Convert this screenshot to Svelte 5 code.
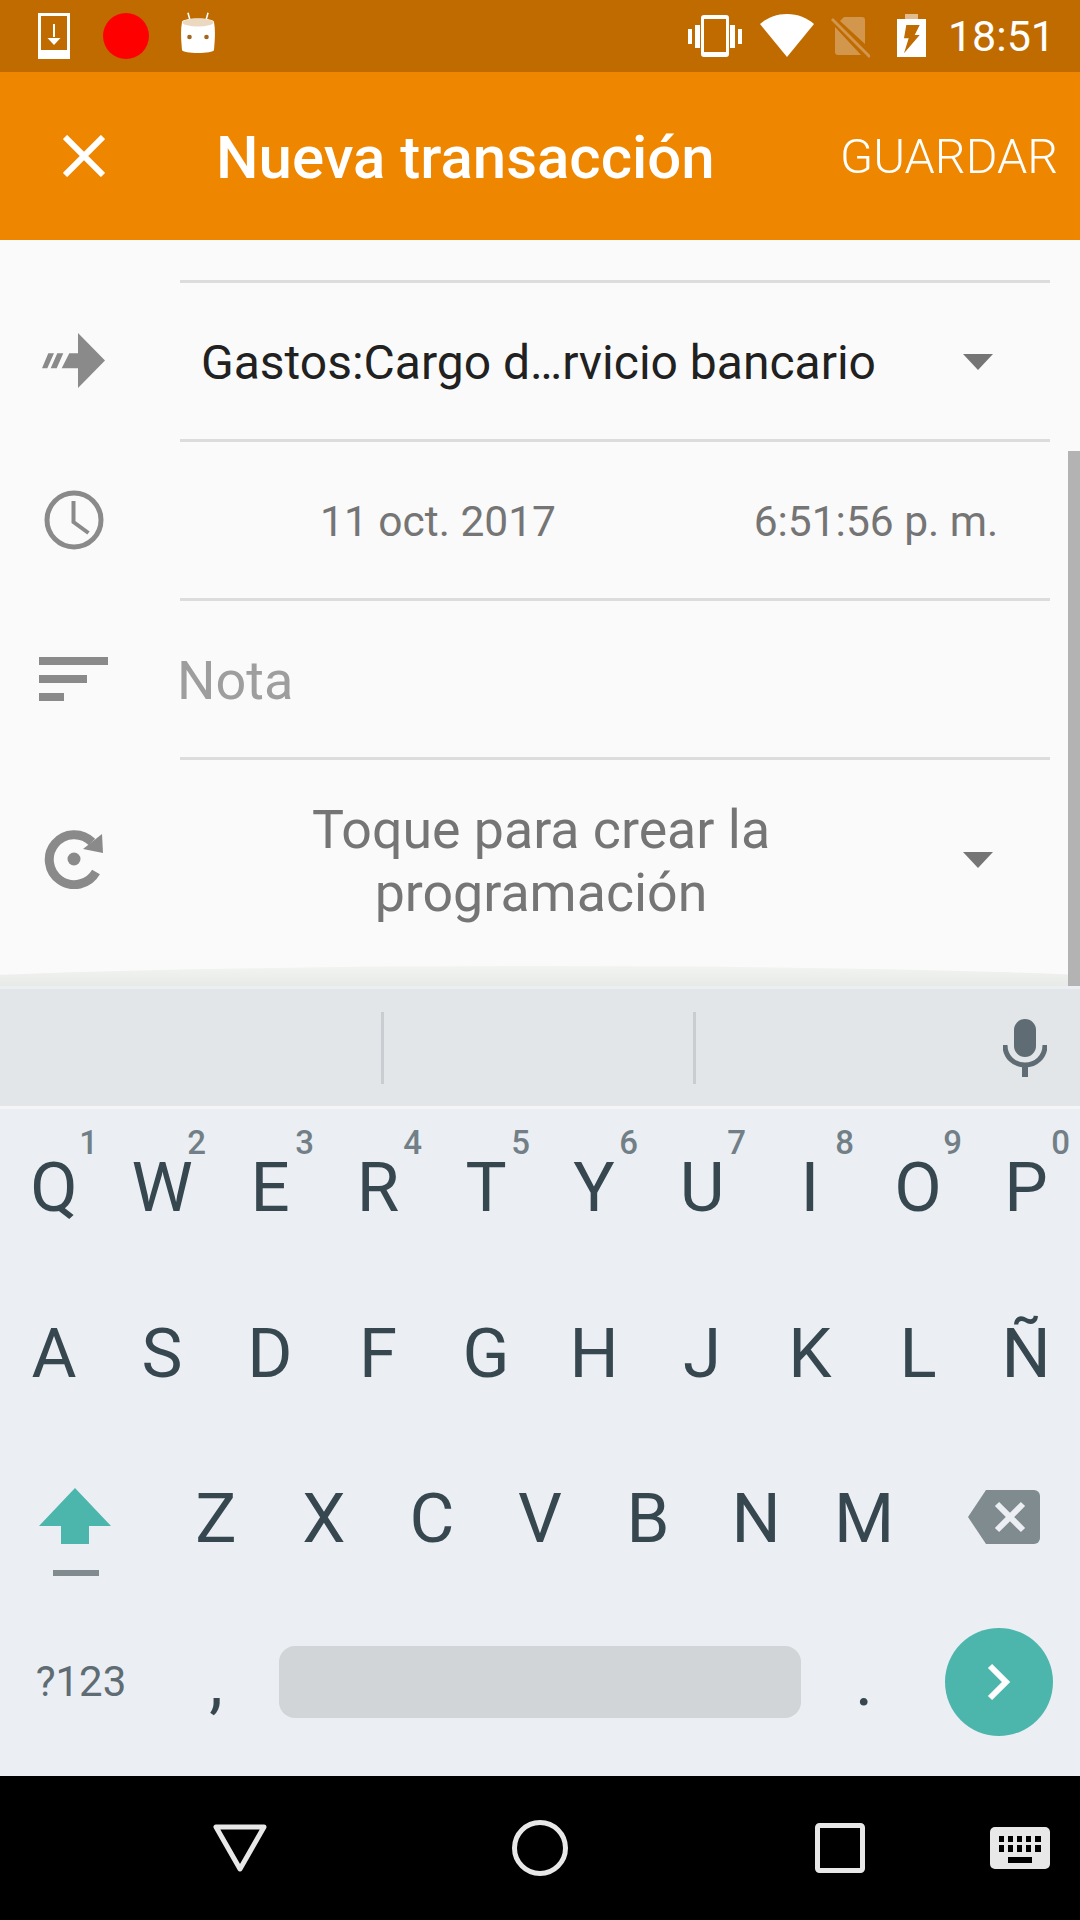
<script>
  const rowOne = [
    ['Q', '1'], ['W', '2'], ['E', '3'], ['R', '4'], ['T', '5'],
    ['Y', '6'], ['U', '7'], ['I', '8'], ['O', '9'], ['P', '0']
  ];
  const rowTwo = ['A', 'S', 'D', 'F', 'G', 'H', 'J', 'K', 'L', 'Ñ'];
  const rowThree = ['Z', 'X', 'C', 'V', 'B', 'N', 'M'];
</script>

<div class="screen">
  <header class="status">
    <div class="status-left">
      <svg class="ic-dl" viewBox="0 0 32 46" width="32" height="46">
        <path fill="#fff" fill-rule="evenodd" d="M0 0h32v46H0zM3 3v34h26V3z" />
        <path fill="#fff" d="M15 11h2v13h-2z" />
        <path fill="#fff" d="M9.500 25h13L16 32z" />
      </svg>
      <span class="rec"></span>
      <svg class="ic-m" viewBox="0 0 34 42" width="34" height="42">
        <path fill="#fff" d="M6.200 1l1.500-.4 2.500 9-1.500.4zM27.800 1l-1.500-.4-2.500 9 1.500.4z" />
        <path fill="#fff" d="M1 10c0-2 7-3.500 16-3.500S33 8 33 10c1.500 8 1 16 0 28-.3 2-8 3-16 3S1.300 40 1 38C0 26-.5 18 1 10z" />
        <ellipse cx="17" cy="10.500" rx="15.500" ry="4" fill="#ead8c0" />
        <circle cx="8.500" cy="25" r="2.300" fill="#a5651a" />
        <circle cx="25.500" cy="25" r="2.300" fill="#a5651a" />
      </svg>
    </div>
    <div class="status-right">
      <svg class="st-vib" viewBox="0 0 54 42" width="54" height="42">
        <path fill="#fff" fill-rule="evenodd" d="M13 3a3 3 0 0 1 3-3h22a3 3 0 0 1 3 3v36a3 3 0 0 1-3 3H16a3 3 0 0 1-3-3zM16 4v33h22V4z" />
        <path fill="#fff" d="M7 10h5v23H7zM42 10h5v23h-5zM0 14h4v15H0zM50 14h4v15h-4z" />
      </svg>
      <svg class="st-wifi" viewBox="0 0 54 43" width="54" height="43">
        <path fill="#fff" d="M0 10C7 4 16 0 27 0s20 4 27 10L27 43z" />
      </svg>
      <svg class="st-sim" viewBox="0 0 40 42" width="40" height="42">
        <path fill="#fff" fill-opacity=".3" d="M14 1h18a3 3 0 0 1 3 3v24L10 5zM5 11l26 28H8a3 3 0 0 1-3-3z" />
        <path fill="#fff" fill-opacity=".3" d="M3 2l38 38-2 2L1 4z" />
      </svg>
      <svg class="st-bat" viewBox="0 0 29 44" width="29" height="44">
        <path fill="#fff" fill-opacity=".55" d="M8 0h13v5H8z" />
        <path fill="#fff" fill-rule="evenodd" d="M0 5h29v38H0zM9.300 11l-2.300 13.300h4.700L7 39.300 22.700 21h-5L22.700 11z" />
      </svg>
      <span class="clock">18:51</span>
    </div>
  </header>

  <div class="toolbar">
    <svg class="close" viewBox="0 0 42 42" width="42" height="42">
      <path d="M2 2l38 38M40 2L2 40" stroke="#fff" stroke-width="6" fill="none" />
    </svg>
    <h1>Nueva transacción</h1>
    <span class="save">GUARDAR</span>
  </div>

  <main class="form">
    <div class="row">
      <svg class="icon" viewBox="0 0 64 55" width="64" height="55">
        <path fill="#8a8a8a" d="M36 0l27 27.500L36 55V35.300H19.700L27.300 20.300H36z" />
        <path fill="#8a8a8a" d="M0 35.300L6.300 20.300H12L5.300 35.300zM8.700 35.300L15.300 20.300H21.300L14.700 35.300z" />
      </svg>
      <div class="field account">
        <span class="value">Gastos:Cargo d…rvicio bancario</span>
        <i class="caret"></i>
      </div>
    </div>

    <div class="row">
      <svg class="icon" viewBox="0 0 60 60" width="60" height="60">
        <circle cx="30" cy="30" r="27" fill="none" stroke="#8a8a8a" stroke-width="5" />
        <path d="M29.500 11v21l15 11" fill="none" stroke="#8a8a8a" stroke-width="4" />
      </svg>
      <div class="field when">
        <span>11 oct. 2017</span>
        <span>6:51:56 p. m.</span>
      </div>
    </div>

    <div class="row">
      <div class="icon note-ic">
        <span class="l1"></span>
        <span class="l2"></span>
        <span class="l3"></span>
      </div>
      <div class="field note">Nota</div>
    </div>

    <div class="row last">
      <svg class="icon" viewBox="0 0 60 60" width="60" height="60">
        <path d="M48 13A25 25 0 1 0 52 43" fill="none" stroke="#8a8a8a" stroke-width="9" />
        <path fill="#8a8a8a" d="M58 5l1 19-20-4z" />
        <circle cx="30" cy="30" r="6.500" fill="#8a8a8a" />
      </svg>
      <div class="field repeat">
        <span class="value">Toque para crear la<br />programación</span>
        <i class="caret"></i>
      </div>
    </div>

    <div class="glow"></div>
    <div class="scroll"></div>
  </main>

  <div class="suggest">
    <span class="sep"></span>
    <span class="sep"></span>
    <svg viewBox="0 0 44 58" width="44" height="58" class="mic">
      <rect x="11" y="0" width="22" height="38" rx="11" fill="#5f6c73" />
      <path d="M2 26c0 12 9 20 20 20s20-8 20-20" fill="none" stroke="#5f6c73" stroke-width="5" />
      <path d="M19 44h6v14h-6z" fill="#5f6c73" />
    </svg>
  </div>

  <div class="keyboard">
    <div class="keys top">
      {#each rowOne as [letter, hint]}
        <div class="key">{letter}<sup>{hint}</sup></div>
      {/each}
    </div>
    <div class="keys">
      {#each rowTwo as letter}
        <div class="key">{letter}</div>
      {/each}
    </div>
    <div class="keys">
      <div class="key wide shift">
        <svg viewBox="0 0 72 88" width="72" height="88">
          <path fill="#4db6ac" d="M36 0l36 38H50v18H22V38H0z" />
          <path fill="#7f8b8f" d="M14 82h46v6H14z" />
        </svg>
      </div>
      {#each rowThree as letter}
        <div class="key">{letter}</div>
      {/each}
      <div class="key wide back">
        <svg viewBox="0 0 72 54" width="72" height="54">
          <path fill="#7f8b8f" d="M18 0h48a6 6 0 0 1 6 6v42a6 6 0 0 1-6 6H18L0 27z" />
          <path d="M29 14l26 26M55 14L29 40" stroke="#ebeff3" stroke-width="6" fill="none" />
        </svg>
      </div>
    </div>
    <div class="keys bottom">
      <div class="sym">?123</div>
      <div class="punct">,</div>
      <div class="space"></div>
      <div class="punct">.</div>
      <div class="enter">
        <svg viewBox="0 0 24 38" width="24" height="38">
          <path d="M3 3l16 16L3 35" fill="none" stroke="#fff" stroke-width="6" />
        </svg>
      </div>
    </div>
  </div>

  <nav class="navbar">
    <svg class="nav-back" viewBox="0 0 54 48" width="54" height="48">
      <path d="M3 3h48L27 45z" fill="none" stroke="#e8e8e8" stroke-width="5" stroke-linejoin="round" />
    </svg>
    <svg class="nav-home" viewBox="0 0 56 56" width="56" height="56">
      <circle cx="28" cy="28" r="25.500" fill="none" stroke="#e8e8e8" stroke-width="5" />
    </svg>
    <svg class="nav-recent" viewBox="0 0 50 50" width="50" height="50">
      <rect x="2.500" y="2.500" width="45" height="45" rx="2" fill="none" stroke="#e8e8e8" stroke-width="5" />
    </svg>
    <svg class="nav-kbd" viewBox="0 0 60 42" width="60" height="42">
      <rect width="60" height="42" rx="5" fill="#e8e8e8" />
      <path d="M9 9h5v6H9zM18 9h5v6h-5zM27 9h5v6h-5zM36 9h5v6h-5zM45 9h6v6h-6zM9 18h5v7H9zM18 18h5v7h-5zM27 18h5v7h-5zM36 18h5v7h-5zM45 18h6v7h-6zM18 30h24v6H18z" fill="#000" />
    </svg>
  </nav>
</div>

<style>
  :global(body) {
    margin: 0;
    background: #000;
  }

  .screen {
    width: 1080px;
    height: 1920px;
    display: flex;
    flex-direction: column;
    overflow: hidden;
    font-family: Roboto, sans-serif;
  }

  .status {
    height: 72px;
    background: #bf6b00;
    display: flex;
    justify-content: space-between;
    align-items: center;
    flex: none;
  }
  .status-left {
    display: flex;
    align-items: center;
    padding-left: 38px;
  }
  .rec {
    width: 46px;
    height: 46px;
    border-radius: 50%;
    background: #f00;
    margin: 0 32px 0 33px;
  }
  .ic-m {
    margin-top: -6px;
  }
  .status-right {
    display: flex;
    align-items: center;
    padding-right: 25px;
  }
  .st-vib {
    margin-right: 18px;
  }
  .st-wifi {
    margin-right: 16px;
    margin-top: -1px;
  }
  .st-sim {
    margin-right: 27px;
    margin-top: 1px;
  }
  .st-bat {
    margin-right: 22px;
  }
  .clock {
    font-size: 43px;
    color: #fff;
  }

  .toolbar {
    height: 168px;
    background: #ee8600;
    display: flex;
    align-items: center;
    color: #fff;
    flex: none;
    padding-left: 63px;
  }
  .close {
    margin-right: 111px;
  }
  h1 {
    font-size: 60px;
    font-weight: 500;
    margin: 2px 0 0;
    width: 624px;
  }
  .save {
    font-size: 48.500px;
    font-weight: 300;
  }

  .form {
    flex: 1;
    background: #fafafa;
    position: relative;
    padding-top: 40px;
    overflow: hidden;
  }
  .row {
    display: grid;
    grid-template-columns: 180px 870px;
    height: 159px;
    align-items: center;
  }
  .row.last {
    height: 203px;
  }
  .icon {
    justify-self: center;
    margin: 2px 0 0 -33px;
  }
  .row.last .icon {
    margin-top: 0;
  }
  .field {
    border-top: 3px solid #dcdcdc;
    height: 154px;
    padding-top: 2px;
    display: flex;
    align-items: center;
  }
  .caret {
    width: 0;
    height: 0;
    border-left: 15px solid transparent;
    border-right: 15px solid transparent;
    border-top: 16px solid #757575;
    flex: none;
  }
  .account {
    font-size: 48px;
    color: #212121;
    justify-content: space-between;
    padding-left: 21px;
    padding-right: 57px;
    width: 792px;
  }
  .when {
    font-size: 42.500px;
    color: #757575;
    display: grid;
    grid-template-columns: 516px 360px;
    justify-items: center;
    width: 870px;
  }
  .note {
    font-size: 54px;
    color: #9e9e9e;
    text-indent: -3px;
  }
  .note-ic {
    width: 69px;
    display: flex;
    flex-direction: column;
    gap: 10px;
  }
  .note-ic span {
    height: 8px;
    background: #8a8a8a;
  }
  .l1 {
    width: 69px;
  }
  .l2 {
    width: 48px;
  }
  .l3 {
    width: 25px;
  }
  .repeat {
    font-size: 53.700px;
    line-height: 63px;
    color: #757575;
    text-align: center;
    padding-top: 0;
    padding-right: 57px;
    width: 813px;
    height: 200px;
    justify-content: space-between;
  }
  .repeat .value {
    width: 722px;
    padding-top: 2px;
  }

  .glow {
    position: absolute;
    left: -200px;
    right: -200px;
    bottom: -8px;
    height: 28px;
    border-radius: 50% 50% 0 0 / 100% 100% 0 0;
    background: linear-gradient(#f2f4f0, #e4e6e5);
  }
  .scroll {
    position: absolute;
    right: 0;
    top: 211px;
    bottom: 0;
    width: 12px;
    background: #b3b3b3;
  }

  .suggest {
    height: 117px;
    border-top: 3px solid #ebeff3;
    border-bottom: 3px solid #f3f5f7;
    background: #e3e6e9;
    flex: none;
    display: grid;
    grid-template-columns: 384px 312px 1fr;
    position: relative;
    align-items: center;
  }
  .sep {
    width: 3px;
    height: 72px;
    background: #c9cdd1;
    justify-self: end;
  }
  .mic {
    position: absolute;
    left: 1003px;
    top: 30px;
  }

  .keyboard {
    background: #ebeff3;
    height: 667px;
    flex: none;
    display: flex;
    flex-direction: column;
    gap: 10px;
  }
  .keys {
    display: flex;
    height: 155px;
    align-items: center;
  }
  .key {
    width: 108px;
    height: 155px;
    font-size: 69px;
    color: #37474f;
    display: flex;
    align-items: center;
    justify-content: center;
    position: relative;
    box-sizing: border-box;
    padding-top: 3px;
  }
  .top .key {
    padding-top: 1px;
  }
  .key sup {
    position: absolute;
    top: 17px;
    right: 10px;
    font-size: 33px;
    line-height: 1;
    font-weight: 500;
    color: #727f86;
  }
  .wide {
    width: 162px;
  }
  .shift {
    justify-content: flex-start;
    padding-left: 39px;
    padding-top: 31px;
  }
  .back {
    justify-content: flex-start;
    padding-left: 50px;
    padding-top: 0;
  }
  .sym {
    width: 162px;
    font-size: 42px;
    color: #5f6c73;
    text-align: center;
  }
  .punct {
    width: 108px;
    font-size: 69px;
    color: #37474f;
    text-align: center;
    line-height: 1;
  }
  .space {
    width: 522px;
    height: 72px;
    background: #d1d5d8;
    border-radius: 16px;
    margin: 0 9px;
  }
  .enter {
    width: 108px;
    height: 108px;
    border-radius: 50%;
    background: #4db6ac;
    display: flex;
    align-items: center;
    justify-content: center;
    margin-left: 27px;
  }

  .navbar {
    height: 144px;
    background: #000;
    flex: none;
    position: relative;
  }
  .navbar svg {
    position: absolute;
  }
  .nav-back {
    left: 213px;
    top: 48px;
  }
  .nav-home {
    left: 512px;
    top: 44px;
  }
  .nav-recent {
    left: 815px;
    top: 47px;
  }
  .nav-kbd {
    left: 990px;
    top: 51px;
  }
</style>
